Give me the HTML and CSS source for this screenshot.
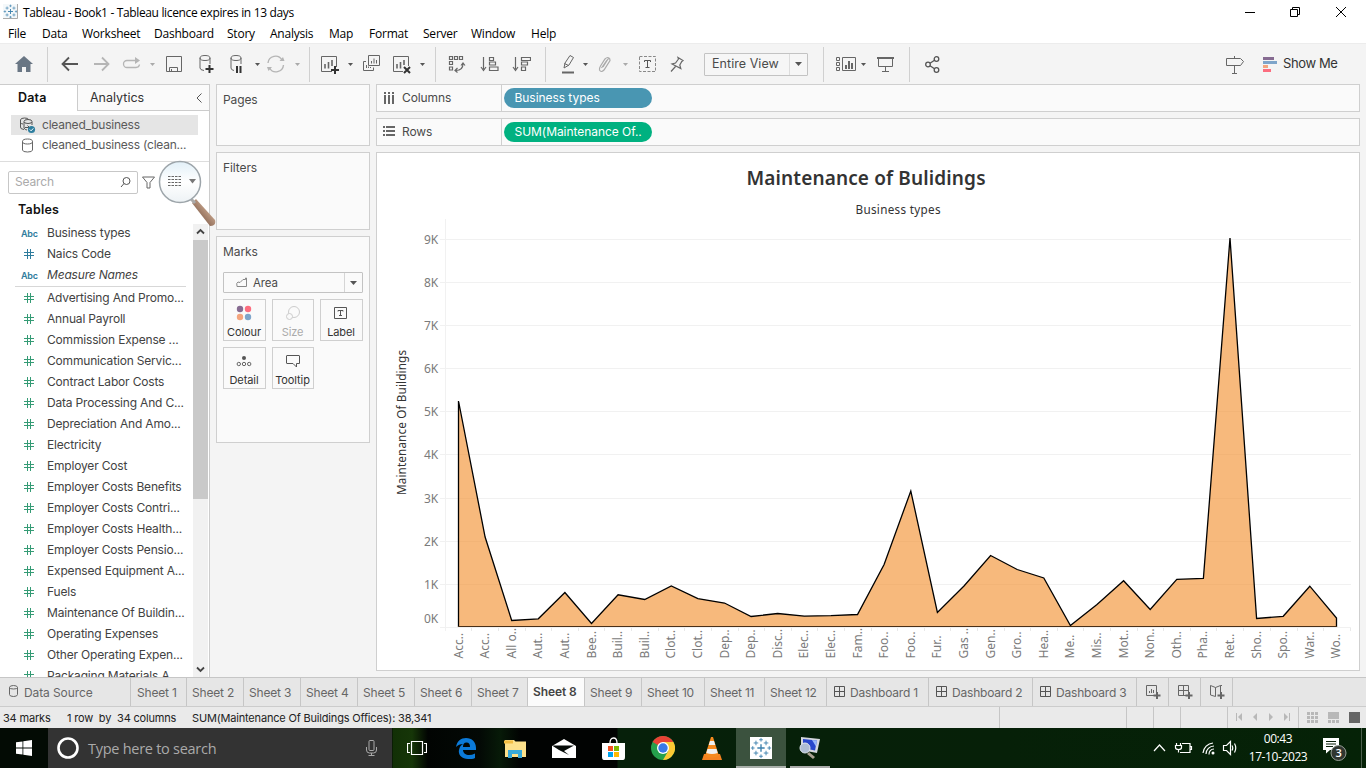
FILE: index.html
```html
<!DOCTYPE html>
<html lang="en">
<head>
<meta charset="utf-8">
<title>Tableau - Book1</title>
<link rel="stylesheet" href="styles.css">
</head>
<body>
<svg width="0" height="0" class="defs">
  <defs>
    <symbol id="hash" viewBox="0 0 10 10"><path d="M3.500 0v10M6.500 0v10M0 3.500h10M0 6.500h10" fill="none" stroke="currentColor"/></symbol>
    <symbol id="caret" viewBox="0 0 5 3"><path d="M0 0h5L2.500 3z" fill="currentColor"/></symbol>
    <symbol id="grid" viewBox="0 0 11 11"><path d="M.5.5h10v10H.5zM5.500.5v10M.5 5.500h10" fill="none" stroke="#555"/></symbol>
    <symbol id="tab" viewBox="0 0 24 24"><g fill="none" stroke="#3d81ad">
      <path d="M12 8v8M8 12h8" stroke-width="1.500"/>
      <path d="M6.500 4v5M4 6.500h5M17.500 4v5M15 6.500h5M6.500 15v5M4 17.500h5M17.500 15v5M15 17.500h5"/>
      <path d="M12 1v4M10 3h4M12 19v4M10 21h4M3 10v4M1 12h4M21 10v4M19 12h4"/></g></symbol>
  </defs>
</svg>
<div class="window">
  <header class="titlebar">
    <svg class="app-icon" width="15" height="15"><path d="M0 0h15v15H0z" fill="#f4f8fa"/><use href="#tab" width="15" height="15"/><path d="M0 14.500h14.500V0" fill="none" stroke="#aaa"/></svg>
    <span class="caption">Tableau - Book1 - Tableau licence expires in 13 days</span>
    <svg class="controls" width="104" height="16" fill="none" stroke="#000"><path d="M0 8.500h10M45.500 5.500h7v7h-7zM47.500 5v-1.500h7v7h-2M91 3l10 10M101 3l-10 10"/></svg>
  </header>
  <nav class="menu"><span>File</span><span>Data</span><span>Worksheet</span><span>Dashboard</span><span>Story</span><span>Analysis</span><span>Map</span><span>Format</span><span>Server</span><span>Window</span><span>Help</span></nav>
  <div class="toolbar">
    <svg width="18" height="16" fill="#697684"><path d="M9 0l9 8h-2.500v8H11v-5H7v5H2.500V8H0z"/></svg>
    <i class="sep"></i>
    <svg width="18" height="16" fill="none" stroke="#555" stroke-width="1.800"><path d="M17 8H2M8 1.500L1.500 8 8 14.500"/></svg>
    <svg width="18" height="16" fill="none" stroke="#b5b5b5" stroke-width="1.800"><path d="M1 8h14M9 1.500L15.500 8 9 14.500"/></svg>
    <svg width="20" height="16" fill="none" stroke="#b5b5b5" stroke-width="1.300"><path d="M14 4.500H5a3.500 3.500 0 0 0 0 7h9a3.500 3.500 0 0 0 3.500-3M10 4.500h6"/><path d="M13 1l5 3.500L13 8z" fill="#b5b5b5" stroke="none"/></svg>
    <svg class="caret dim"><use href="#caret"/></svg>
    <svg width="18" height="18" fill="none" stroke="#666"><path d="M1.500 1.500h15v15h-15zM4.500 16.500v-4h8v4M6.500 14v2.500"/></svg>
    <svg width="18" height="20" fill="none" stroke="#666"><ellipse cx="8" cy="4" rx="5" ry="2.500"/><path d="M3 4v10q0 2 4 2.500M13 4v6"/><path d="M12.500 11v8M8.500 15h8" stroke="#333" stroke-width="2"/></svg>
    <svg width="18" height="20" fill="none" stroke="#666"><ellipse cx="8" cy="4" rx="5" ry="2.500"/><path d="M3 4v10q0 2 3 2.500M13 4v6"/><path d="M9 12v7M12.500 12v7" stroke="#333" stroke-width="2"/></svg>
    <svg class="caret"><use href="#caret"/></svg>
    <svg width="20" height="18" fill="none" stroke="#b5b5b5" stroke-width="1.400"><path d="M2 8a7.500 7.500 0 0 1 14-3M17.500 10a7.500 7.500 0 0 1-14 3"/><path d="M13.500 6h5L17 2zM1 12h5l-3.500 4z" fill="#b5b5b5" stroke="none"/></svg>
    <svg class="caret dim"><use href="#caret"/></svg>
    <i class="sep"></i>
    <svg width="20" height="19" fill="none" stroke="#666"><path d="M12 16.500H1.500v-15h15V12"/><path d="M5 9v4.500M8.500 7v6.500M12 5v6" stroke-width="1.600"/><path d="M15 11v8M11 15h8" stroke="#333" stroke-width="2"/></svg>
    <svg class="caret"><use href="#caret"/></svg>
    <svg width="19" height="18" fill="none" stroke="#666"><path d="M6.500.5h11v10h-11zM4 6.500H1.500v9h10v-3M4.500 13v-3M6.500 13v-1.500M8.500 13v-1M9.500 8.500V6M12 8.500v-5M14.500 8.500V5"/></svg>
    <svg width="20" height="19" fill="none" stroke="#666"><path d="M11 16.500H1.500v-15h15V11"/><path d="M5 9v4.500M8.500 7v6.500M12 5v5" stroke-width="1.600"/><path d="M12 12l6 6M18 12l-6 6" stroke="#333" stroke-width="2"/></svg>
    <svg class="caret"><use href="#caret"/></svg>
    <i class="sep"></i>
    <svg width="18" height="18" fill="none" stroke="#666" stroke-width="1.200"><path d="M1.500 1.500h3v3h-3zM6.500 1.500h3v3h-3zM11.500 1.500h3v3h-3zM1.500 6.500h3v3h-3zM1.500 12h3v3h-3zM8 15.500q7 0 7-7M13 10.500l2-2.500 2 2.500M9.500 13l-2.500 2.500 2.500 2"/></svg>
    <svg width="19" height="16" fill="none" stroke="#666" stroke-width="1.200"><path d="M3.500 1v12M1 11l2.500 3.500L6 11M9.500 1.500h4v3h-4zM9.500 6h6v3h-6zM9.500 11h8.500v3.500H9.500z"/></svg>
    <svg width="19" height="16" fill="none" stroke="#666" stroke-width="1.200"><path d="M3.500 1v12M1 11l2.500 3.500L6 11M9.500 1.500h9v3h-9zM9.500 6h6v3h-6zM9.500 11h4v3.500h-4z"/></svg>
    <i class="sep"></i>
    <svg width="16" height="20" fill="none" stroke="#666"><path d="M3 14l1-5L9 1.500l3.500 2L8 11zM3.500 9.500l4 2"/><path d="M1 18.500h12" stroke-width="2"/></svg>
    <svg class="caret"><use href="#caret"/></svg>
    <svg width="14" height="17" fill="none" stroke="#aaa" stroke-width="1.200"><path d="M5 11l5-8q2-1 2 1.500l-6 9.500q-3 3-4.500 0-.5-1.500 1-4L7 3q3-3 5 0M3.500 12L9 4"/></svg>
    <svg class="caret dim"><use href="#caret"/></svg>
    <svg width="17" height="16" fill="none" stroke="#888"><path d="M.5.5h16v15H.5z" stroke-dasharray="3 1.500"/><path d="M5.500 6V4.500h6V6M8.500 4.500v7M6.500 11.500h4" stroke="#555"/></svg>
    <svg width="15" height="17" fill="none" stroke="#666" stroke-width="1.200"><path d="M8 1.500l5 3-1.200 1-2 3.500 1 3.500L2 8l3.500-1 3-4zM5.500 10.500L1 15.500"/></svg>
    <div class="select"><span>Entire View</span><svg class="drop" width="7" height="4"><path d="M0 0h7L3.500 4z" fill="#555"/></svg></div>
    <i class="sep"></i>
    <svg width="20" height="16" fill="none" stroke="#666"><path d="M.5 1.500h3v3h-3zM.5 6.500h3v3h-3zM.5 11.500h3v3h-3zM6.500 1.500h13v13h-13z"/><path d="M10 9v4M13 5v8M16 7v6" stroke-width="2"/></svg>
    <svg class="caret"><use href="#caret"/></svg>
    <svg width="17" height="17" fill="none" stroke="#666"><path d="M0 2h17" stroke-width="2"/><path d="M1.500 2v8.500h14V2M8.500 10.500v5M5 15.500h7"/></svg>
    <i class="sep"></i>
    <svg width="15" height="17" fill="none" stroke="#555" stroke-width="1.300"><circle cx="3" cy="8.500" r="2.300"/><circle cx="11.500" cy="3" r="2.300"/><circle cx="11.500" cy="14" r="2.300"/><path d="M5 7.200l4.500-3M5 9.800l4.500 3"/></svg>
    <svg width="18" height="19" fill="none" stroke="#666"><path d="M.5 3.500h14l3 3-3 4H.5zM8.500 1v2.500M8.500 10.500V18M6 18.500h5"/></svg>
    <svg width="14" height="15"><path fill="#866b91" d="M0 0h11v3H0z"/><path fill="#7ea5ca" d="M0 4h14v3H0z"/><path fill="#f4a57e" d="M0 8h5v3H0z"/><path fill="#fc6d7f" d="M0 12h8v3H0z"/></svg>
    <span class="showme">Show Me</span>
  </div>

  <main class="work">
    <aside class="sidebar">
      <div class="side-tabs"><b>Data</b><span>Analytics<svg width="6" height="10" fill="none" stroke="#555"><path d="M5.500.5L1 5l4.500 4.500"/></svg></span></div>
      <div class="sources">
        <div class="source active-source"><svg width="17" height="17" fill="none" stroke="#555"><path d="M5 12.500Q1 12 1.500 10V3q0-2 4-2t4 1.500M1.500 5.500Q2 7 4 7"/><ellipse cx="9" cy="4.500" rx="4" ry="2"/><path d="M5 5v6q1 2 3 2M13 5v3M6 10.500h4M8.500 8.500l2 2"/><circle cx="12.500" cy="12.500" r="3.600" fill="#2f7f9f" stroke="none"/><path d="M10.800 12.500l1.300 1.300 2.200-2.400" stroke="#fff"/></svg><span>cleaned_business</span></div>
        <div class="source"><svg width="17" height="15" fill="none" stroke="#666"><ellipse cx="8.500" cy="3.500" rx="5" ry="2.500"/><path d="M3.500 3.500v8.500q0 2 5 2t5-2V3.500"/></svg><span>cleaned_business (clean...</span></div>
      </div>
      <div class="search-row">
        <div class="search"><span>Search</span><svg width="11" height="11" fill="none" stroke="#555"><circle cx="6.500" cy="4" r="3.500"/><path d="M4 6.500L1 10"/></svg></div>
        <svg class="funnel" width="13" height="13" fill="none" stroke="#666"><path d="M.5 1h12L8 6.500v5.500H5V6.500z"/></svg>
        <svg class="magnifier" width="58" height="68" viewBox="158 160 58 68">
          <defs><linearGradient id="lens" x1="0" y1="0" x2="0" y2="1"><stop offset="0" stop-color="#e2f0f8"/><stop offset=".5" stop-color="#fff"/><stop offset="1" stop-color="#edf2f5"/></linearGradient><linearGradient id="handle" x1="0" y1="1" x2="1" y2="0"><stop offset=".3" stop-color="#876451"/><stop offset=".7" stop-color="#c9a78e"/></linearGradient></defs>
          <path d="M192 203l4-4 19 21q1.500 6-5 6z" fill="url(#handle)"/>
          <path d="M190 198l5 5" stroke="#aaa" stroke-width="3"/>
          <circle cx="180" cy="182" r="20.500" fill="url(#lens)" stroke="#9da5aa" stroke-width="1.500"/>
          <path d="M168 176.500h13M168 179.500h13M168 182.500h13M168 185.500h13" stroke="#666" stroke-dasharray="2.500 1"/>
          <path d="M189 179h7l-3.500 4.500z" fill="#777"/>
        </svg>
      </div>
      <h2>Tables</h2>
      <div class="fields">
        <div class="field-list">
          <div class="f dim-f"><i class="abc">Abc</i>Business types</div>
          <div class="f dim-f"><svg><use href="#hash"/></svg>Naics Code</div>
          <div class="f dim-f"><i class="abc">Abc</i><em>Measure Names</em></div>
          <div class="rule"></div>
          <div class="f"><svg><use href="#hash"/></svg>Advertising And Promo...</div>
          <div class="f"><svg><use href="#hash"/></svg>Annual Payroll</div>
          <div class="f"><svg><use href="#hash"/></svg>Commission Expense ...</div>
          <div class="f"><svg><use href="#hash"/></svg>Communication Servic...</div>
          <div class="f"><svg><use href="#hash"/></svg>Contract Labor Costs</div>
          <div class="f"><svg><use href="#hash"/></svg>Data Processing And C...</div>
          <div class="f"><svg><use href="#hash"/></svg>Depreciation And Amo...</div>
          <div class="f"><svg><use href="#hash"/></svg>Electricity</div>
          <div class="f"><svg><use href="#hash"/></svg>Employer Cost</div>
          <div class="f"><svg><use href="#hash"/></svg>Employer Costs Benefits</div>
          <div class="f"><svg><use href="#hash"/></svg>Employer Costs Contri...</div>
          <div class="f"><svg><use href="#hash"/></svg>Employer Costs Health...</div>
          <div class="f"><svg><use href="#hash"/></svg>Employer Costs Pensio...</div>
          <div class="f"><svg><use href="#hash"/></svg>Expensed Equipment A...</div>
          <div class="f"><svg><use href="#hash"/></svg>Fuels</div>
          <div class="f"><svg><use href="#hash"/></svg>Maintenance Of Buildin...</div>
          <div class="f"><svg><use href="#hash"/></svg>Operating Expenses</div>
          <div class="f"><svg><use href="#hash"/></svg>Other Operating Expen...</div>
          <div class="f"><svg><use href="#hash"/></svg>Packaging Materials A...</div>
        </div>
        <div class="scroll"><svg width="15" height="15" fill="none" stroke="#444" stroke-width="1.800"><path d="M4 9.500L7.500 6 11 9.500"/></svg><div class="thumb"></div><svg class="down" width="15" height="15" fill="none" stroke="#444" stroke-width="1.800"><path d="M4 5.500L7.500 9 11 5.500"/></svg></div>
      </div>
    </aside>

    <section class="cards">
      <div class="card pages">Pages</div>
      <div class="card filters">Filters</div>
      <div class="card marks">Marks
        <div class="mark-type"><svg width="14" height="11" fill="none" stroke="#888"><path d="M2 9.500q-1-4 1-4.500l2 .5 3-3h2.500V1h1v8.500z"/></svg><span>Area</span><svg class="drop" width="7" height="4"><path d="M0 0h7L3.500 4z" fill="#555"/></svg></div>
        <div class="buttons">
          <div class="btn"><svg width="16" height="16"><circle cx="4" cy="4" r="3.200" fill="#866b91"/><circle cx="12" cy="4" r="3.200" fill="#fc6d7f"/><circle cx="4" cy="12" r="3.200" fill="#f4a57e"/><circle cx="12" cy="12" r="3.200" fill="#7ea5ca"/></svg>Colour</div>
          <div class="btn off"><svg width="16" height="16" fill="#fafafa" stroke="#ccc"><circle cx="9" cy="7" r="5.500"/><circle cx="4.500" cy="11.500" r="3"/></svg>Size</div>
          <div class="btn"><svg width="16" height="16" fill="none" stroke="#555"><path d="M1.500 2.500h12v11h-12z"/><path d="M5 6.500v-1h5v1M7.500 5.500v5M6 10.500h3"/></svg>Label</div>
          <div class="btn"><svg width="16" height="16" fill="none" stroke="#666"><circle cx="8" cy="5" r="2" fill="#555" stroke="none"/><circle cx="2.800" cy="11" r="1.700"/><circle cx="8" cy="11" r="1.700"/><circle cx="13.200" cy="11" r="1.700"/></svg>Detail</div>
          <div class="btn"><svg width="16" height="16" fill="none" stroke="#555"><path d="M2 2.500h12q.5 0 .5.5v7.500h-3V14L8 10.500H2q-.5 0-.5-.5V3q0-.5.5-.5z"/></svg>Tooltip</div>
        </div>
      </div>
    </section>

    <section class="stage">
      <div class="shelf"><div class="shelf-name"><svg width="12" height="12" fill="#666"><path d="M1 0h2v2H1zM5 0h2v2H5zM9 0h2v2H9zM1 3h2v9H1zM5 3h2v9H5zM9 3h2v9H9z"/></svg><span>Columns</span></div><div class="pill blue">Business types</div></div>
      <div class="shelf"><div class="shelf-name"><svg width="12" height="12" fill="#666"><path d="M0 0h2v2H0zM0 4h2v2H0zM0 8h2v2H0zM3 0h9v2H3zM3 4h9v2H3zM3 8h9v2H3z"/></svg><span>Rows</span></div><div class="pill green">SUM(Maintenance Of..</div></div>
      <div class="view">
        <svg class="chart" width="982" height="517" viewBox="377 153 982 517">
          <text x="866" y="185" class="ch-title" text-anchor="middle" textLength="239">Maintenance of Bulidings</text>
          <text x="898" y="214" class="ch-head" text-anchor="middle" textLength="85">Business types</text>
          <text transform="translate(406 495) rotate(-90)" class="ch-axis" textLength="145">Maintenance Of Buildings</text>
          <path d="M440 239.500h911M440 282.500h911M440 325.500h911M440 368.500h911M440 411.500h911M440 454.500h911M440 498.500h911M440 541.500h911M440 584.500h911M440 627.500h911" stroke="#f1f1f1"/>
          <path d="M445.500 219v412" stroke="#f1f1f1"/>
          <path d="M471.500 628v3M498.500 628v3M525.500 628v3M551.500 628v3M578.500 628v3M604.500 628v3M631.500 628v3M658.500 628v3M684.500 628v3M711.500 628v3M738.500 628v3M764.500 628v3M791.500 628v3M817.500 628v3M844.500 628v3M871.500 628v3M897.500 628v3M924.500 628v3M950.500 628v3M977.500 628v3M1004.500 628v3M1030.500 628v3M1057.500 628v3M1083.500 628v3M1110.500 628v3M1137.500 628v3M1163.500 628v3M1190.500 628v3M1216.500 628v3M1243.500 628v3M1270.500 628v3M1297.500 628v3M1323.500 628v3M1350.500 628v3" stroke="#e9e9e9"/>
          <g class="ch-y">
            <text x="424" y="244">9K</text><text x="424" y="287">8K</text><text x="424" y="330">7K</text><text x="424" y="373">6K</text><text x="424" y="416">5K</text><text x="424" y="459">4K</text><text x="424" y="503">3K</text><text x="424" y="546">2K</text><text x="424" y="589">1K</text><text x="424" y="623">0K</text>
          </g>
          <path d="M458.500 627V401L485.100 537 511.700 620.500 538.300 618.800 564.900 592.500 591.500 623.500 618.100 594.800 644.700 599.500 671.300 586 697.900 598.600 724.500 603 751.100 616.500 777.700 613.500 804.300 616.100 830.900 615.700 857.500 614.500 884.100 564.500 910.800 491 937.400 612.500 964 586 990.600 555.500 1017.200 569.500 1043.800 578 1070.400 625.500 1097 604.500 1123.600 580.700 1150.200 609.500 1176.800 579.300 1203.400 578.400 1230 238 1256.600 618.500 1283.200 616.300 1309.800 586.200 1336.500 618V627z" fill="#f28e2b" fill-opacity=".62"/>
          <path d="M458.500 627V401L485.100 537 511.700 620.500 538.300 618.800 564.900 592.500 591.500 623.500 618.100 594.800 644.700 599.500 671.300 586 697.900 598.600 724.500 603 751.100 616.500 777.700 613.500 804.300 616.100 830.900 615.700 857.500 614.500 884.100 564.500 910.800 491 937.400 612.500 964 586 990.600 555.500 1017.200 569.500 1043.800 578 1070.400 625.500 1097 604.500 1123.600 580.700 1150.200 609.500 1176.800 579.300 1203.400 578.400 1230 238 1256.600 618.500 1283.200 616.300 1309.800 586.200 1336.500 618V627" fill="none" stroke="#000" stroke-width="1.300"/>
          <path d="M458 626.500h879" stroke="#4a2f17"/>
          <g class="ch-x" id="xlabels"></g>
        </svg>
      </div>
    </section>
  </main>

  <div class="tabs">
    <div class="t ds"><svg width="9" height="12" fill="none" stroke="#666"><path d="M.5 2.500q0-2 4-2t4 2v7q0 2-4 2t-4-2zq0 1.500 4 1.500t4-1.500"/></svg>Data Source</div>
    <div class="t">Sheet 1</div><div class="t s">Sheet 2</div><div class="t s">Sheet 3</div><div class="t s">Sheet 4</div><div class="t s">Sheet 5</div><div class="t s">Sheet 6</div><div class="t s">Sheet 7</div><div class="t s on">Sheet 8</div><div class="t s">Sheet 9</div><div class="t s">Sheet 10</div><div class="t s">Sheet 11</div><div class="t s">Sheet 12</div>
    <div class="t db"><svg width="11" height="11"><use href="#grid"/></svg>Dashboard 1</div><div class="t db"><svg width="11" height="11"><use href="#grid"/></svg>Dashboard 2</div><div class="t db"><svg width="11" height="11"><use href="#grid"/></svg>Dashboard 3</div>
    <div class="t new"><svg width="16" height="16" fill="none" stroke="#666"><path d="M8 11.500H.5v-10h10V8M3.500 9V7M5.500 9V5M7.500 9V6"/><path d="M11 8v7M7.500 11.500h7" stroke-width="2"/></svg></div>
    <div class="t new"><svg width="16" height="16" fill="none" stroke="#666"><path d="M8 11.500H.5v-10h10V8M5.500 1.500v10M.5 6.500h10"/><path d="M11 8v7M7.500 11.500h7" stroke-width="2"/></svg></div>
    <div class="t new"><svg width="16" height="16" fill="none" stroke="#666"><path d="M5.500 12.500l-5-1.500V1.500l5 2 5-2V8M5.500 3.500v9M10.500 1.500h1.500"/><path d="M11 8v7M7.500 11.500h7" stroke-width="2"/></svg></div>
  </div>

  <footer class="status">
    <span>34 marks</span><span>1 row&nbsp; by&nbsp; 34 columns</span><span>SUM(Maintenance Of Buildings Offices): 38,341</span>
    <i></i><i></i><i></i><i></i>
    <div class="nav"><svg width="56" height="8" fill="#b8b8b8"><path d="M0 0h1v8H0zM6 0v8L2 4zM21 0v8l-4-4zM33 0v8l4-4zM48 0v8l4-4zM53 0h1v8H53z"/></svg></div>
    <div class="modes"><svg width="55" height="12" fill="#b8b8b8"><path d="M0 0h3v3H0zM4 0h3v3H4zM8 0h3v3H8zM0 4h3v3H0zM4 4h3v3H4zM8 4h3v3H8zM0 8h3v3H0zM4 8h3v3H4zM8 8h3v3H8zM21 0h11v7H21zM21 8h3v3h-3zM25 8h3v3h-3zM29 8h3v3h-3z"/><path d="M42 0h11v11H42z" fill="#666"/></svg></div>
  </footer>

  <div class="taskbar">
    <div class="start"><svg width="16" height="16" fill="#fff"><path d="M0 2.300L6.500 1.400v6.200H0zM7.300 1.300L16 0v7.600H7.300zM0 8.400h6.500v6.200L0 13.700zM7.300 8.400H16V16l-8.700-1.300z"/></svg></div>
    <div class="tb-search"><svg width="22" height="22" fill="none" stroke="#fff" stroke-width="2.600"><circle cx="11" cy="11" r="9.500"/></svg><span>Type here to search</span><svg width="11" height="16" fill="none" stroke="#aaa"><rect x="3" y=".5" width="5" height="10" rx="1"/><path d="M.5 7v3q0 3 3 3h4q3 0 3-3V7M5.500 13v2.500M2.500 15.500h6"/></svg></div>
    <div class="app"><svg width="20" height="14" fill="none" stroke="#fff" stroke-width="1.200"><path d="M4.500.5h11v13h-11zM3 2.500H.5v9H3M17 2.500h2.500v9H17"/></svg></div>
    <div class="app"><svg width="20" height="21" viewBox="0 0 20 21"><path d="M0 9C1 3 5 0 10 0c6 0 10 4 10 10v2H7c0 3 3 5 6 5 2 0 4-.5 6-1.500V20c-2 1-4 1.300-7 1C5 21 2 16 3 12c.5-3 2-5 4-6C4 6 2 7 0 9zm7 0h7c0-3-1-4.500-3.500-4.500S7 6 7 9z" fill="#0b7ad8"/></svg></div>
    <div class="app"><svg width="22" height="19"><path d="M1 1h9l1.500 1.500H22V18H1z" fill="#fde18b"/><path d="M0 1.500h9v3H0z" fill="#f2bd42"/><path d="M4 19v-8h14v8h-4v-4H8v4z" fill="#38aada"/></svg></div>
    <div class="app"><svg width="24" height="19"><path d="M0 7L12 0l12 7v12H0z" fill="#fff"/><path d="M0 6.500h22L12 12l5 4-10-5z" fill="#060b08"/></svg></div>
    <div class="app"><svg width="23" height="23"><path d="M8 6Q8 1 11.500 1T15 6" fill="none" stroke="#fff" stroke-width="1.300"/><path d="M0 6h23v14q0 3-2 3H2q-2 0-2-3z" fill="#fff"/><path d="M6 9h5v5H6z" fill="#f25022"/><path d="M12 9h5v5h-5z" fill="#7fba00"/><path d="M6 15h5v5H6z" fill="#00a4ef"/><path d="M12 15h5v5h-5z" fill="#ffb900"/></svg></div>
    <div class="app"><svg width="24" height="24"><circle cx="12" cy="12" r="12" fill="#25a04c"/><path d="M12 12L1.600 6A12 12 0 0 1 22.400 6H12z" fill="#e84235"/><path d="M12 6h10.400A12 12 0 0 1 12 24l5.200-9z" fill="#fcc934"/><circle cx="12" cy="12" r="6" fill="#fff"/><circle cx="12" cy="12" r="4.700" fill="#3979e8"/></svg></div>
    <div class="app"><svg width="20" height="23"><path d="M2 17h16l2 6H0z" fill="#f58220"/><path d="M9 0h2l6 19q-7 3-14 0z" fill="#f68a1f"/><path d="M8 4h4l1.300 4H6.700zM5.500 12h9l1.200 4Q10 18 4.300 16z" fill="#f0f0f0"/></svg></div>
    <div class="app active"><svg width="22" height="22"><path d="M0 0h22v22H0z" fill="#fff"/><use href="#tab" width="22" height="22"/></svg></div>
    <div class="app running"><svg width="22" height="24"><path d="M2 1l19 2-3 14-16-3z" fill="#d5d7df"/><path d="M4 3l14 1.500-2 10L4 12z" fill="#2847cc"/><path d="M13 4l5 .5-1 6z" fill="#98b6fa"/><circle cx="6" cy="12" r="5" fill="#aebdd3" stroke="#dfe5ee"/><path d="M10 16l6 5-2 2-6-5z" fill="#aaa193"/></svg></div>
    <div class="tray">
      <svg width="84" height="18" fill="none" stroke="#fff" stroke-width="1.200"><path d="M1 12l5.500-6L12 12"/><path d="M29 4.500h8v9H27M37 7.500h1.500v3H37M23.500 4v2M27.500 4v2M22.500 6.500h6v2q0 2-3 2t-3-2zM25.500 10.500v3"/><path d="M50 14A11 11 0 0 1 60 4M53 15a8 8 0 0 1 8-8M56 15.500a5 5 0 0 1 5-5.500"/><circle cx="60" cy="14" r="1.500" fill="#fff" stroke="none"/><path d="M70.500 6.500h3l4-4v13l-4-4h-3zM79 6.500q1.500 2.500 0 5M81.500 4.500q2.500 4.500 0 9"/></svg>
      <div class="clock"><span>00:43</span><span>17-10-2023</span></div>
      <svg class="note" width="26" height="26"><path d="M1 1h16v12h-9l-4 3.500V13H1z" fill="#fff"/><path d="M4 4.500h10M4 7h10M4 9.500h7" stroke="#092009"/><circle cx="16.500" cy="16" r="7.500" fill="#303630" stroke="#98a098"/><text x="13.500" y="20" class="badge">3</text></svg>
    </div>
    <div class="peek"></div>
  </div>
</div>
<script src="chart.js"></script>
</body>
</html>
```

FILE: styles.css
```css
* { box-sizing: border-box; }
body { margin: 0; overflow: hidden; font-family: Inter, "Liberation Sans", sans-serif; font-size: 12px; color: #333; }
svg { display: block; flex: none; }
.defs { position: absolute; }
.window { width: 1366px; height: 768px; display: flex; flex-direction: column; background: #f4f4f4; overflow: hidden; }

.titlebar { height: 22px; background: #fff; display: flex; align-items: center; padding: 2px 17px 0 3px; font: 12px "Open Sans", sans-serif; color: #000; }
.app-icon { margin-top: -2px; }
.caption { margin-left: 5px; letter-spacing: -.35px; }
.controls { margin-left: auto; margin-top: -1px; }
.menu { height: 21px; background: #fff; display: grid; grid-template-columns: 34px 40px 72px 73px 43px 59px 40px 54px 48px 60px auto; padding-left: 8px; font: 12px/24px "Open Sans", sans-serif; letter-spacing: -.22px; color: #000; }

.toolbar { height: 41px; border-top: 1px solid #ececec; background: #f4f4f4; display: grid; align-items: center; justify-items: start; padding-left: 15px;
  grid-template-columns: 32px 14px 32px 29px 28px 15px 32px 31px 27px 11px 29px 14px 11px 28px 14px 30px 28px 15px 13px 32px 32px 33px 16px 22px 15px 25px 16px 31px 34px 119px 13px 25px 16px 32px 16px 301px 37px 20px auto; }
.sep { width: 1px; height: 35px; background: #d0d0d0; }
.caret { width: 5px; height: 3px; color: #555; }
.caret.dim { color: #aaa; }
.select { width: 104px; height: 23px; border: 1px solid #c3c3c3; border-radius: 1px; display: flex; align-items: center; padding-left: 7px; color: #4b4b4b; font-size: 12.500px; background: #f6f6f6; }
.select span { flex: none; width: 78px; height: 21px; line-height: 20px; border-right: 1px solid #ddd; letter-spacing: .05px; }
.select .drop { margin-left: 5px; }
.showme { font-size: 13px; letter-spacing: -.4px; color: #333; margin-top: -2px; }

.work { height: 593px; display: flex; }
.sidebar { width: 210px; background: #fff; border-right: 1px solid #ccc; border-top: 1px solid #ccc; display: flex; flex-direction: column; }
.side-tabs { display: flex; height: 26px; line-height: 26px; font-size: 12.500px; }
.side-tabs b { width: 77px; padding-left: 18px; font-weight: 600; color: #111; letter-spacing: .2px; }
.side-tabs span { flex: 1; display: flex; align-items: center; justify-content: space-between; padding: 0 7px 0 12px; background: #fafafa; border-left: 1px solid #ccc; border-bottom: 1px solid #ccc; }
.sources { height: 51px; padding-top: 4px; border-bottom: 1px solid #ddd; }
.source { height: 20px; margin: 0 11px; display: flex; align-items: center; padding-left: 8px; gap: 6px; color: #5a5a5a; letter-spacing: -.22px; white-space: nowrap; }
.source span { margin-top: -1px; }
.active-source { background: #e5e5e5; }
.search-row { height: 40px; display: flex; align-items: center; padding-left: 8px; }
.search { flex: none; width: 130px; height: 23px; border: 1px solid #c7c7c7; border-radius: 2px; display: flex; align-items: center; justify-content: space-between; padding: 0 6px; color: #aaa; letter-spacing: -.15px; }
.search span { margin-top: -1px; }
.funnel { margin-left: 4px; }
.magnifier { margin: -2px -20px 0 3px; position: relative; z-index: 1; align-self: flex-start; }
h2 { margin: 0 0 0 18px; font-size: 12.500px; line-height: 16px; font-weight: 600; color: #111; letter-spacing: .2px; }
.fields { height: 459px; display: flex; padding-top: 4px; }
.field-list { width: 193px; overflow: hidden; }
.f { height: 21px; display: flex; align-items: center; padding-left: 24px; white-space: nowrap; color: #424242; letter-spacing: -.18px; }
.f svg { width: 10px; height: 10px; color: #359b75; margin-right: 13px; }
.dim-f svg { color: #2f7c9d; }
.abc { width: 26px; margin: 1px 0 0 -3px; font: 600 9px Inter, sans-serif; color: #2f7c9d; }
.rule { height: 1px; margin: 1px 7px 0 15px; background: #d7d7d7; }
.scroll { width: 15px; height: 453px; margin-top: 2px; background: #f1f1f1; display: flex; flex-direction: column; }
.thumb { height: 259px; background: #c9c9c9; margin-top: 1px; }
.down { margin-top: auto; }

.cards { width: 154px; margin-left: 6px; display: flex; flex-direction: column; gap: 6px; }
.card { border: 1px solid #cfcfcf; background: #fafafa; padding: 7px 6px 0; line-height: 15px; color: #4a4a4a; letter-spacing: -.1px; }
.pages { height: 62px; } .filters { height: 78px; } .marks { height: 207px; }
.mark-type { height: 21px; margin-top: 13px; border: 1px solid #c3c3c3; border-radius: 1px; display: flex; align-items: center; padding-left: 11px; font-size: 11.500px; }
.mark-type span { flex: none; width: 96px; height: 19px; line-height: 20px; padding-left: 4px; border-right: 1px solid #d5d5d5; }
.mark-type .drop { margin-left: 5px; }
.buttons { display: grid; grid-template-columns: 43px 42px 43px; column-gap: 6px; row-gap: 6px; margin-top: 6px; }
.btn { height: 42px; border: 1px solid #cfcfcf; display: flex; flex-direction: column; align-items: center; padding: 5px 1px 0 0; gap: 4px; font-size: 11px; color: #333; letter-spacing: -.1px; }
.btn.off { color: #aaa; }

.stage { width: 984px; margin-left: 6px; display: flex; flex-direction: column; gap: 6px; }
.shelf { height: 28px; border: 1px solid #cfcfcf; background: #fafafa; display: flex; align-items: center; }
.shelf-name { width: 125px; height: 26px; border-right: 1px solid #cfcfcf; display: flex; align-items: center; padding: 0 0 1px 6px; gap: 7px; color: #4a4a4a; letter-spacing: -.1px; }
.pill { width: 148px; height: 20px; margin-left: 2px; border-radius: 10px; line-height: 20px; padding-left: 10.500px; color: #fff; white-space: nowrap; letter-spacing: -.05px; }
.blue { background: #4996b2; } .green { background: #00b180; }
.view { height: 519px; border: 1px solid #cfcfcf; background: #fff; }
.ch-title { font: 600 19px "Noto Sans", sans-serif; fill: #333; }
.ch-head, .ch-axis { font: 11.700px "Noto Sans", sans-serif; fill: #333; }
.ch-y, .ch-x { font: 12px "Noto Sans", sans-serif; fill: #7b7b7b; }

.tabs { height: 30px; border-top: 1px solid #c6c6c6; border-bottom: 1px solid #ccc; background: #e6e6e6; display: grid;
  grid-template-columns: 131px 56px 57px 57px 57px 57px 57px 56px 57px 57px 63px 60px 62px 102px 104px 104px 32px 32px 32px; }
.t { border-right: 1px solid #c6c6c6; display: flex; align-items: center; padding-left: 6px; color: #666; white-space: nowrap; letter-spacing: -.2px; }
.s { padding-left: 5px; }
.t.on { background: #fbfbfb; font-weight: 600; color: #444; padding-bottom: 2px; letter-spacing: -.1px; }
.ds { padding-left: 9px; gap: 6px; letter-spacing: -.1px; } .ds svg { margin-top: -2px; }
.db { padding-left: 7px; gap: 5px; } .db svg { margin-top: -2px; }
.new { padding-left: 9px; }

.status { height: 21px; background: #eaeaea; display: grid; align-items: center; grid-template-columns: 64px 125px 807px 127px 27px 27px 47px 71px auto; padding-left: 3px; font-size: 11px; color: #222; white-space: nowrap; letter-spacing: -.18px; }
.status i { height: 21px; border-left: 1px solid #c6c6c6; }
.nav { height: 21px; border-left: 1px solid #c6c6c6; padding: 6px 0 0 8px; }
.modes { height: 21px; border-left: 1px solid #c6c6c6; padding: 5px 0 0 8px; }

.taskbar { height: 40px; display: flex; color: #fff; background: linear-gradient(90deg, #030b04 0, #030b04 392px, #123006 393px, #163608 412px, #010402 428px, #030905 480px, #071a08 500px, #010302 520px, #010302 617px, #06200a 618px, #062008 1000px, #052207 1366px); }
.start { width: 48px; display: flex; align-items: center; justify-content: center; }
.tb-search { width: 344px; background: #333; display: flex; align-items: center; padding: 0 15px 0 9px; color: #aaa; font: 14.500px "Open Sans", sans-serif; }
.tb-search span { margin-left: 9px; flex: 1; letter-spacing: -.27px; }
.app { width: 49.200px; display: flex; align-items: center; justify-content: center; }
.active { background: #3b523e; box-shadow: inset 0 -2px #a9afaa; }
.running { background: linear-gradient(#aaa, #aaa) 4px bottom / 40px 2px no-repeat; }
.tray { margin-left: auto; display: flex; align-items: center; padding-right: 13px; }
.tray > svg:first-child { margin-right: -3px; }
.clock { width: 78px; margin-left: 5px; display: flex; flex-direction: column; align-items: center; font: 12px/18px "Open Sans", sans-serif; letter-spacing: -.4px; }
.note { margin: 4px 0 0 5px; }
.badge { font: 600 11px "Open Sans", sans-serif; fill: #fff; }
.peek { width: 1px; margin-right: 4px; background: #4c5f4d; }
```

FILE: chart.js
```js
const names = ["Acc..","Acc..","All o..","Aut..","Aut..","Bee..","Buil..","Buil..","Clot..","Clot..","Dep..","Dep..","Disc..","Elec..","Elec..","Fam..","Foo..","Foo..","Fur..","Gas ..","Gen..","Gro..","Hea..","Me..","Mis..","Mot..","Non..","Oth..","Pha..","Ret..","Sho..","Spo..","War..","Wo.."];
const layer = document.getElementById("xlabels");
names.forEach((name, i) => {
  const label = document.createElementNS("http://www.w3.org/2000/svg", "text");
  const x = 462.5 + i * 26.6;
  label.setAttribute("transform", `translate(${x} 658.5) rotate(-90)`);
  label.textContent = name;
  layer.appendChild(label);
});
```
